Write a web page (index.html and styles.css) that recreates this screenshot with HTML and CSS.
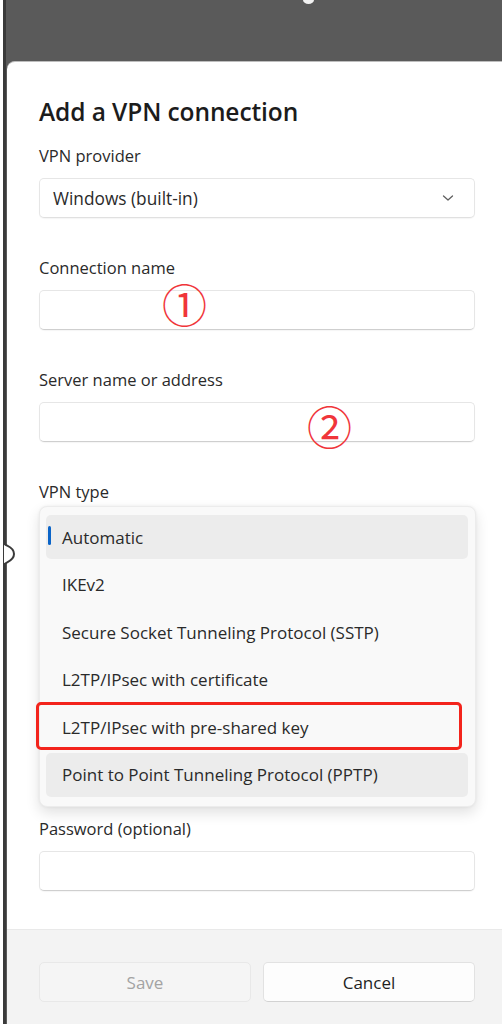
FILE: index.html
```html
<!DOCTYPE html>
<html>
<head>
<meta charset="utf-8">
<link rel="stylesheet" href="styles.css">
</head>
<body>
<div class="screen">
  <div class="top-notch"></div>
  <svg class="edge-bump" width="16" height="30" viewBox="0 0 16 30"><path d="M1 0 V4 C1 7 11 7 11 15 C11 23 1 23 1 26 V30" fill="#fff" stroke="#3a3a3a" stroke-width="2"/></svg>
  <div class="dialog">
    <div class="body">
      <h1 class="title">Add a VPN connection</h1>

      <div class="field">
        <div class="label">VPN provider</div>
        <div class="select">
          <span>Windows (built-in)</span>
          <svg class="chev" width="12" height="8" viewBox="0 0 12 8"><path d="M1.5 2 L6 6 L10.5 2" fill="none" stroke="#5f5f5f" stroke-width="1.3" stroke-linecap="round" stroke-linejoin="round"/></svg>
        </div>
      </div>

      <div class="field">
        <div class="label">Connection name</div>
        <div class="input"><span class="mark mark1">①</span></div>
      </div>

      <div class="field">
        <div class="label">Server name or address</div>
        <div class="input"><span class="mark mark2">②</span></div>
      </div>

      <div class="field">
        <div class="label">VPN type</div>
        <div class="popup">
          <div class="item selected"><span class="indicator"></span>Automatic</div>
          <div class="item">IKEv2</div>
          <div class="item">Secure Socket Tunneling Protocol (SSTP)</div>
          <div class="item">L2TP/IPsec with certificate</div>
          <div class="item boxed">L2TP/IPsec with pre-shared key<span class="redbox"></span></div>
          <div class="item hover">Point to Point Tunneling Protocol (PPTP)</div>
        </div>
      </div>

      <div class="field pw">
        <div class="label">Password (optional)</div>
        <div class="input"></div>
      </div>
    </div>
    <div class="footer">
      <div class="btn disabled">Save</div>
      <div class="btn">Cancel</div>
    </div>
  </div>
</div>
</body>
</html>
```

FILE: styles.css
```css
* { box-sizing: border-box; }
html, body { margin: 0; padding: 0; }
body {
  background: #ffffff;
  width: 502px;
  height: 1024px;
  overflow: hidden;
  font-family: "Open Sans", "Noto Sans", sans-serif;
  color: #1f1f1f;
}
.screen {
  position: relative;
  margin-left: 3px;
  height: 1024px;
  border-left: 3px solid #3a3a3a;
  background: #5a5a5a;
  padding-top: 61px;
}
.top-notch {
  position: absolute;
  left: 297px;
  top: -4px;
  width: 11px;
  height: 8px;
  border-radius: 50%;
  background: #f2f2f2;
}
.edge-bump {
  position: absolute;
  left: -3px;
  top: 539px;
  z-index: 2;
}
.dialog {
  margin-left: 1px;
  height: 963px;
  background: #ffffff;
  border-top-left-radius: 8px;
  border-top: 1px solid #bdbdbd;
  display: flex;
  flex-direction: column;
}
.body {
  padding: 34px 27px 0 32px;
  height: 867px;
}
.title {
  margin: 0;
  font-size: 24.5px;
  font-weight: 600;
  line-height: 32px;
  color: #1c1c1c;
  letter-spacing: -0.1px;
}
.field { margin-top: 18px; }
.field + .field { margin-top: 40px; }
.label {
  font-size: 16.5px;
  line-height: 20px;
  color: #2a2a2a;
}
.select, .input {
  position: relative;
  margin-top: 12px;
  height: 40px;
  background: #ffffff;
  border: 1px solid #e6e6e6;
  border-bottom-color: #cfcfcf;
  border-radius: 5px;
  box-shadow: 0 1px 1px rgba(0,0,0,0.04);
}
.select {
  display: flex;
  align-items: center;
  justify-content: space-between;
  padding: 0 20px 0 13px;
  font-size: 17.3px;
  color: #2a2a2a;
  border-bottom-color: #e0e0e0;
}
.chev { display: block; }
.mark {
  position: absolute;
  font-family: "Noto Sans CJK SC", sans-serif;
  color: #f0353a;
  font-size: 45px;
  line-height: 45px;
}
.mark1 { left: 122px; top: -10px; }
.mark2 { left: 267px; top: 0px; }
.popup {
  margin-top: 4px;
  height: 301px;
  margin-right: -1px;
  background: #f9f9f9;
  border: 1px solid #ececec;
  border-radius: 8px;
  box-shadow: 0 6px 14px rgba(0,0,0,0.12), 0 0 3px rgba(0,0,0,0.06);
  padding: 8px 7px 0 6px;
  display: flex;
  flex-direction: column;
  gap: 3.5px;
  position: relative;
  z-index: 1;
}
.item {
  position: relative;
  height: 44px;
  flex: none;
  display: flex;
  align-items: center;
  padding-left: 16px;
  font-size: 17px;
  color: #2a2a2a;
  border-radius: 5px;
}
.item.selected, .item.hover { background: #ececec; }
.indicator {
  position: absolute;
  left: 2px;
  top: 11px;
  width: 3px;
  height: 19px;
  border-radius: 2px;
  background: #0a64c8;
}
.redbox {
  position: absolute;
  left: -10px;
  right: 6px;
  top: -3px;
  bottom: -1px;
  border: 3px solid #f3241c;
  border-radius: 5px;
}
.field.pw { margin-top: 12px; }
.footer {
  flex: 1;
  background: #f3f3f3;
  border-top: 1px solid #e9e9e9;
  padding: 32px 27px 0 32px;
  display: flex;
  gap: 12px;
  align-items: flex-start;
}
.btn {
  flex: 1;
  height: 40px;
  border-radius: 5px;
  background: #fdfdfd;
  border: 1px solid #e2e2e2;
  border-bottom-color: #d2d2d2;
  display: flex;
  align-items: center;
  justify-content: center;
  font-size: 17px;
  color: #1f1f1f;
}
.btn.disabled {
  background: #f5f5f5;
  border-color: #e8e8e8;
  color: #a3a3a3;
}
```
